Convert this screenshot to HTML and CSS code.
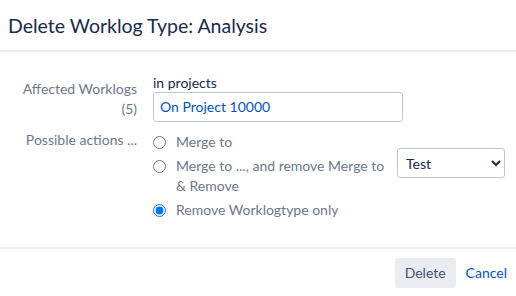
FILE: index.html
```html
<!DOCTYPE html>
<html lang="en">
<head>
    <meta charset="UTF-8">
    <title>Delete Worklog Type</title>
    <link rel="stylesheet" href="styles.css">
</head>
<body>
    <div class="dialog">
        <header class="dialog-header">
            <h2>Delete Worklog Type: Analysis</h2>
        </header>

        <form class="dialog-body">
            <div class="field-row">
                <label class="field-label">Affected Worklogs (5)</label>
                <div class="field-value">
                    <div class="field-caption">in projects</div>
                    <div class="project-box">On Project 10000</div>
                </div>
            </div>
            <div class="field-row">
                <label class="field-label">Possible actions ...</label>
                <div class="field-value actions">
                    <label class="action">
                        <input type="radio" name="action" value="merge">
                        <span>Merge to</span>
                    </label>
                    <div class="action-select">
                        <label class="action">
                            <input type="radio" name="action" value="merge-remove">
                            <span>Merge to ..., and remove Merge to &amp; Remove</span>
                        </label>
                        <select class="type-select">
                            <option>Test</option>
                        </select>
                    </div>
                    <label class="action">
                        <input type="radio" name="action" value="remove" checked>
                        <span>Remove Worklogtype only</span>
                    </label>
                </div>
            </div>
        </form>

        <footer class="dialog-footer">
            <button type="button" class="btn-delete">Delete</button>
            <a href="#" class="btn-cancel">Cancel</a>
        </footer>
    </div>
</body>
</html>
```

FILE: styles.css
```css
body {
    margin: 0;
    padding: 0;
    font-family: 'Lato', 'Noto Sans', sans-serif;
    font-size: 14px;
    background-color: #fff;
    color: #172b4d;
}
.dialog {
    width: 516px;
    height: 296px;
    display: flex;
    flex-direction: column;
}
.dialog-header {
    height: 52px;
    padding: 0 8px;
    display: flex;
    align-items: center;
    border-bottom: 2px solid #ebecf0;
    box-sizing: border-box;
}
.dialog-header h2 {
    margin: 0;
    font-size: 19.5px;
    font-weight: 400;
    color: #172b4d;
}
.dialog-body {
    flex: 1;
    padding: 22px 0 0;
    display: flex;
    flex-direction: column;
    gap: 8px;
}
.field-row {
    display: grid;
    grid-template-columns: 137px 1fr;
    column-gap: 16px;
}
.field-label {
    text-align: right;
    color: #6b778c;
    line-height: 20px;
    padding-left: 14px;
}
.field-row:first-child .field-label {
    padding-top: 5px;
}
.field-caption {
    line-height: 18px;
}
.project-box {
    width: 250px;
    height: 30px;
    box-sizing: border-box;
    border: 1px solid #c1c7d0;
    border-radius: 3px;
    padding: 0 6px;
    line-height: 28px;
    color: #0052cc;
}
.actions {
    display: flex;
    flex-direction: column;
    gap: 4px;
    padding-top: 2px;
}
.action {
    display: flex;
    align-items: flex-start;
    gap: 10px;
    color: #6b778c;
    line-height: 20px;
}
.action input {
    margin: 4px 0 0;
    width: 13px;
    height: 13px;
    flex-shrink: 0;
}
.action-select {
    display: flex;
    align-items: flex-start;
    gap: 8px;
}
.action-select .action {
    width: 236px;
}
.type-select {
    margin-top: -8px;
    width: 108px;
    height: 30px;
    border: 1px solid #c1c7d0;
    border-radius: 3px;
    background-color: #fff;
    color: #172b4d;
    font-family: inherit;
    font-size: 14px;
    padding: 0 4px;
}
.dialog-footer {
    border-top: 2px solid #ebecf0;
    height: 49px;
    box-sizing: border-box;
    display: flex;
    align-items: center;
    justify-content: flex-end;
    gap: 10px;
    padding: 0 9px 0 0;
}
.btn-delete {
    height: 30px;
    padding: 0 10px;
    border: none;
    border-radius: 3px;
    background-color: #ebecf0;
    color: #42526e;
    font-family: inherit;
    font-size: 14px;
}
.btn-cancel {
    color: #0052cc;
    text-decoration: none;
}
```
